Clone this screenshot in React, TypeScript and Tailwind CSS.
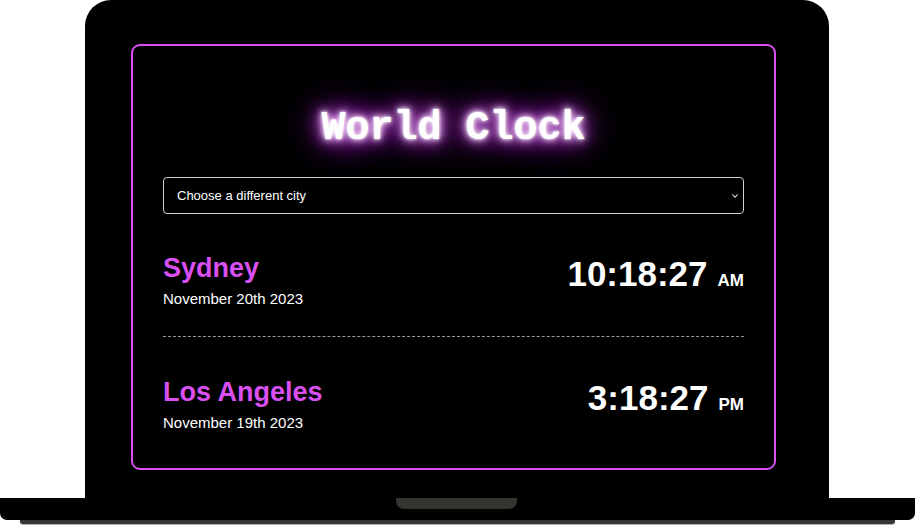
import { ChevronDown } from 'lucide-react';

const cities = [
  { name: 'Sydney', date: 'November 20th 2023', time: '10:18:27', period: 'AM' },
  { name: 'Los Angeles', date: 'November 19th 2023', time: '3:18:27', period: 'PM' },
];

function CityRow({ city, last }: { city: (typeof cities)[number]; last?: boolean }) {
  return (
    <div className={last ? 'flex justify-between items-start pt-[39px] pb-[20px]' : 'flex justify-between items-start pt-[16px] pb-[28px] border-b border-dashed border-[#9a9a9a]'}>
      <div>
        <h2 className="text-[27px] font-bold leading-[32px] text-[#d94ff2]">{city.name}</h2>
        <p className="text-[15px] leading-[18px] text-white mt-[6px]">{city.date}</p>
      </div>
      <div className="flex items-baseline text-white font-bold pt-[2px]">
        <span className="text-[35px] leading-[40px]">{city.time}</span>
        <span className="text-[17px] ml-[10px]">{city.period}</span>
      </div>
    </div>
  );
}

export default function App() {
  return (
    <div className="w-[915px] h-[525px] bg-white overflow-hidden font-['Liberation_Sans',Arial,sans-serif]">
      {/* Laptop lid */}
      <div className="ml-[85px] w-[744px] h-[498px] bg-black rounded-t-[26px] pt-[44px]">
        <div className="ml-[46px] w-[645px] h-[426px] border-[2.5px] border-[#d94ff2] rounded-[9px] px-[30px]">
          <h1
            className="text-center text-white font-bold text-[40px] leading-[48px] mt-[59px] font-['Liberation_Mono','Courier_New',monospace] [text-shadow:0_0_3px_#fff,0_0_7px_#fff,0_0_12px_#eb8cff,0_0_18px_#d050f0,0_0_28px_#b83ad8,0_0_40px_#9028b0,0_0_52px_#601878]"
          >
            World Clock
          </h1>
          <div className="relative mt-[24px]">
            <select className="w-full h-[37px] appearance-none bg-black text-white text-[13px] pl-[13px] border border-[#cfcfcf] rounded-[4px] outline-none">
              <option>Choose a different city</option>
              <option value="Europe/London">London</option>
              <option value="Asia/Tokyo">Tokyo</option>
            </select>
            <ChevronDown className="absolute right-[4px] top-[14px] w-[10px] h-[10px] text-white pointer-events-none" strokeWidth={2.5} />
          </div>
          <div className="mt-[22px]">
            <CityRow city={cities[0]} />
            <CityRow city={cities[1]} last />
          </div>
        </div>
      </div>
      {/* Laptop base */}
      <div className="w-[915px] h-[22px] bg-black rounded-b-[7px] flex justify-center">
        <div className="ml-[-3px] w-[121px] h-[11px] bg-[#35342f] rounded-b-[8px]"></div>
      </div>
      <div className="mx-[20px] h-[4px] bg-[#363636] rounded-b-[3px] shadow-[0_1px_1px_#aaa]"></div>
    </div>
  );
}
